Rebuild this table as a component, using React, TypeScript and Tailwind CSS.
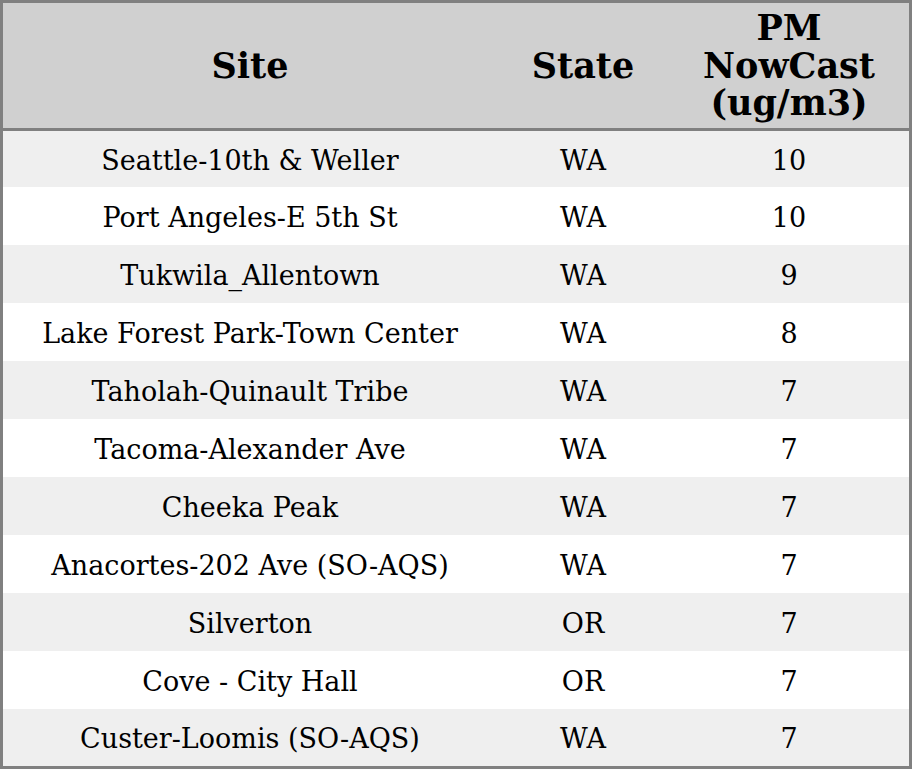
const rows: [string, string, string][] = [
  ['Seattle-10th & Weller', 'WA', '10'],
  ['Port Angeles-E 5th St', 'WA', '10'],
  ['Tukwila_Allentown', 'WA', '9'],
  ['Lake Forest Park-Town Center', 'WA', '8'],
  ['Taholah-Quinault Tribe', 'WA', '7'],
  ['Tacoma-Alexander Ave', 'WA', '7'],
  ['Cheeka Peak', 'WA', '7'],
  ['Anacortes-202 Ave (SO-AQS)', 'WA', '7'],
  ['Silverton', 'OR', '7'],
  ['Cove - City Hall', 'OR', '7'],
  ['Custer-Loomis (SO-AQS)', 'WA', '7'],
];

export default function App() {
  return (
    <div className="w-[912px] h-[769px] bg-white font-['DejaVu_Serif',serif] text-black">
      <div className="flex h-full flex-col border-[3px] border-[#808080]">
        <div className="grid h-[128px] shrink-0 grid-cols-[494px_172px_240px] items-center border-b-[3px] border-[#808080] bg-[#d0d0d0] text-center text-[35px] font-bold leading-[37.5px]">
          <div>Site</div>
          <div>State</div>
          <div>
            PM
            <br />
            NowCast
            <br />
            (ug/m3)
          </div>
        </div>
        <div className="flex flex-1 flex-col">
          {rows.map(([site, state, pm], i) => (
            <div
              key={site}
              className={`grid grid-cols-[494px_172px_240px] items-center pt-0.5 text-center text-[27px] leading-none ${
                i === 0 ? 'h-[56px]' : i === rows.length - 1 ? 'h-[57px]' : 'h-[58px]'
              } ${i % 2 === 0 ? 'bg-[#efefef]' : 'bg-white'}`}
            >
              <div>{site}</div>
              <div>{state}</div>
              <div>{pm}</div>
            </div>
          ))}
        </div>
      </div>
    </div>
  );
}
